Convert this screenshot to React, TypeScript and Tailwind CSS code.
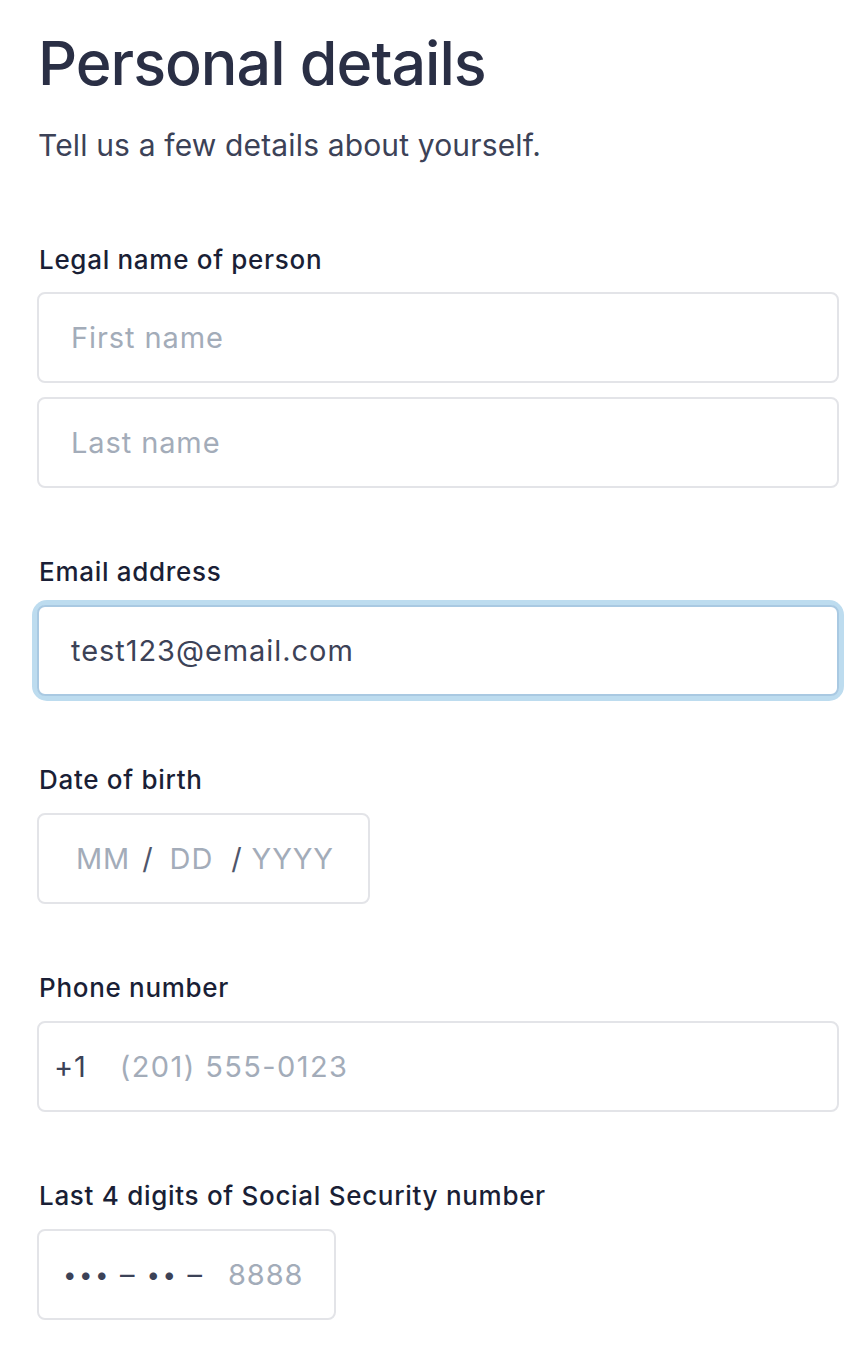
import React from "react";

const inputBox =
  "h-[91px] rounded-[8px] border-2 border-[#e3e4e8] bg-white flex items-center";

function Label({ children }: { children: React.ReactNode }) {
  return (
    <div className="h-[30px] leading-[30px] text-[26px] font-medium text-[#1a1f36] tracking-[0.7px]">
      {children}
    </div>
  );
}

export default function App() {
  return (
    <div
      className="min-h-[1358px] w-[864px] bg-white pl-[37px] pr-[25px] text-[#3c4257]"
      style={{ fontFamily: "Inter, 'Noto Sans', sans-serif" }}
    >
      <h1 className="pt-[25px] text-[61px] leading-[76px] font-medium text-[#2a2f45] tracking-[-1px] pl-[1px]">
        Personal details
      </h1>
      <p className="mt-[26px] text-[30px] leading-[36px] text-[#3c4257] tracking-[0.15px] pl-[1px]">
        Tell us a few details about yourself.
      </p>

      <div className="mt-[82px] pl-[2px]">
        <Label>Legal name of person</Label>
      </div>
      <div className="mt-[17px] flex flex-col gap-[14px] text-[29px] tracking-[0.9px]">
        <div className={inputBox + " pl-[32px]"}>
          <span className="text-[#a3acb9]">First name</span>
        </div>
        <div className={inputBox + " pl-[32px]"}>
          <span className="text-[#a3acb9]">Last name</span>
        </div>
      </div>

      <div className="mt-[69px] pl-[2px]">
        <Label>Email address</Label>
      </div>
      <div className="mt-[18px] rounded-[10px] ring-[5px] ring-[#bddcef]">
        <div className="h-[91px] rounded-[8px] border-2 border-[#a9c9e2] bg-white flex items-center pl-[32px] text-[29px] tracking-[0.95px]">
          <span className="text-[#3c4257]">test123@email.com</span>
        </div>
      </div>

      <div className="mt-[69px] pl-[2px]">
        <Label>Date of birth</Label>
      </div>
      <div className={inputBox + " mt-[18px] w-[333px] pl-[37px] text-[29px] tracking-[0.9px]"}>
        <span className="text-[#a3acb9]">MM</span>
        <span className="ml-[12px] text-[#4f566b]">/</span>
        <span className="ml-[16px] text-[#a3acb9]">DD</span>
        <span className="ml-[18px] text-[#4f566b]">/</span>
        <span className="ml-[9px] text-[#a3acb9]">YYYY</span>
      </div>

      <div className="mt-[69px] pl-[2px]">
        <Label>Phone number</Label>
      </div>
      <div className={inputBox + " mt-[18px] pl-[15px] text-[29px] tracking-[0.9px]"}>
        <span className="text-[#3c4257]">+1</span>
        <span className="ml-[33px] text-[#a3acb9] tracking-[1.4px]">(201) 555-0123</span>
      </div>

      <div className="mt-[69px] pl-[2px]">
        <Label>Last 4 digits of Social Security number</Label>
      </div>
      <div className={inputBox + " mt-[18px] w-[299px] pl-[24px] pr-[31px]"}>
        <div className="flex-1 flex items-center overflow-hidden whitespace-nowrap text-[29px]">
          <span className="text-[#3c4257] text-[24px] tracking-[2.5px]">•••</span>
          <span className="ml-[9px] text-[#3c4257]">–</span>
          <span className="ml-[12px] text-[#3c4257] text-[24px] tracking-[2.5px]">••</span>
          <span className="ml-[9px] text-[#3c4257]">–</span>
          <span className="ml-[26px] text-[#a3acb9] tracking-[0.9px]">8888</span>
        </div>
      </div>
    </div>
  );
}
